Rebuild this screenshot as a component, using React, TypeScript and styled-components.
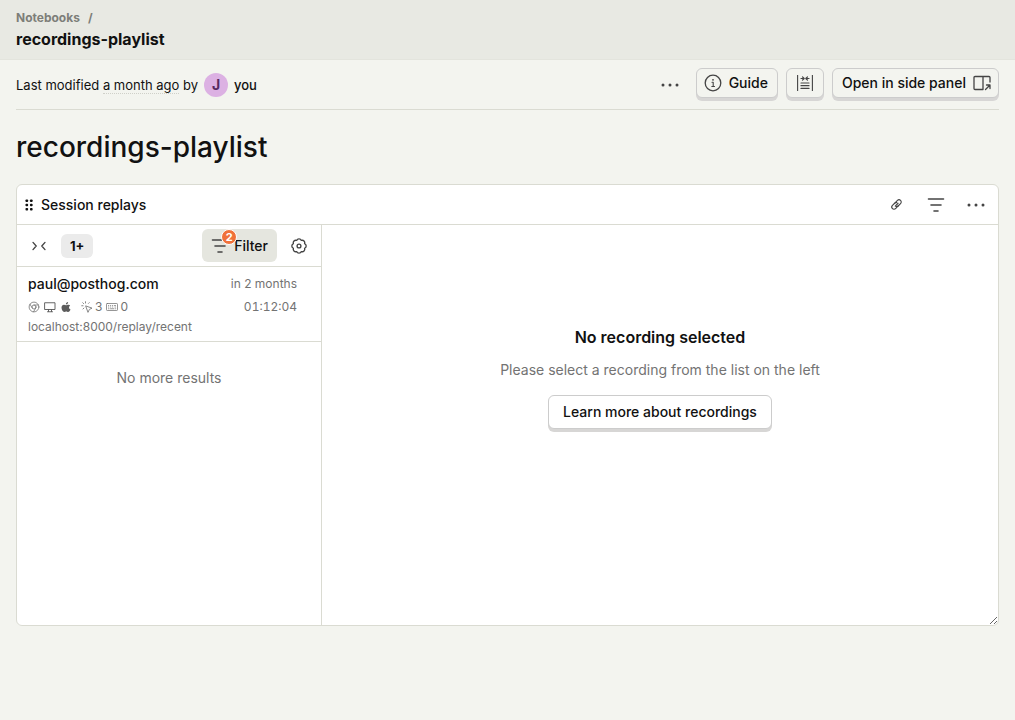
import React from "react";
import styled, { createGlobalStyle, css } from "styled-components";

const colors = {
  page: "#f3f4ef",
  header: "#e8e9e3",
  border: "#dadbd2",
  text: "#111111",
  muted: "#737373",
  icon: "#444444",
};

const GlobalStyle = createGlobalStyle`
  *, *::before, *::after { box-sizing: border-box; }
  body {
    margin: 0;
    background: ${colors.page};
    color: ${colors.text};
    font-family: Inter, "Liberation Sans", sans-serif;
    font-size: 14px;
    line-height: 20px;
  }
  h1, h2, h3, p, ul { margin: 0; padding: 0; }
  svg { display: block; flex: none; }
`;

const TopBar = styled.header`
  padding: 8px 16px;
  background: ${colors.header};
  border-bottom: 1px solid #e3e4dd;
`;

const Breadcrumbs = styled.nav`
  display: flex;
  gap: 8px;
  font-size: 12px;
  font-weight: 700;
  color: #7d7e79;
`;

const BreadcrumbLink = styled.a`
  color: inherit;
  text-decoration: none;
`;

const PageName = styled.h1`
  font-size: 16px;
  line-height: 23px;
  font-weight: 700;
`;

const Content = styled.main`
  padding: 0 16px;
`;

const MetaBar = styled.div`
  display: flex;
  align-items: center;
  justify-content: space-between;
  height: 50px;
  border-bottom: 1px solid ${colors.border};
`;

const Modified = styled.div`
  display: flex;
  align-items: center;
  gap: 6px;
  font-size: 13px;
  line-height: 18px;
`;

const RelativeTime = styled.time`
  border-bottom: 1px dotted #cfd0c9;
`;

const Avatar = styled.span`
  display: flex;
  align-items: center;
  justify-content: center;
  width: 24px;
  height: 24px;
  border-radius: 50%;
  background: #dcb1e3;
  color: #572a62;
  font-size: 14px;
  font-weight: 700;
`;

const UserName = styled.span`
  font-weight: 500;
`;

const Actions = styled.div`
  display: flex;
  align-items: center;
  gap: 8px;
`;

const buttonPadding = {
  none: "0 8px",
  start: "0 9px 0 6px",
  end: "0 6px 0 9px",
  large: "0 14px",
};

const RaisedButton = styled.button<{ $icon?: "start" | "end"; $large?: boolean; $surface?: string }>`
  display: inline-flex;
  align-items: center;
  justify-content: center;
  gap: 6px;
  height: ${(p) => (p.$large ? 34 : 30)}px;
  margin-bottom: 3px;
  padding: ${(p) => buttonPadding[p.$large ? "large" : p.$icon ?? "none"]};
  border: 1px solid #cccccc;
  border-radius: 6px;
  background: ${(p) => p.$surface ?? colors.page};
  box-shadow: 0 3px 0 #d7d6d5;
  color: ${colors.text};
  font: 500 14px/20px Inter, "Liberation Sans", sans-serif;
  white-space: nowrap;
  cursor: pointer;
`;

const FlatButton = styled.button<{ $active?: boolean; $small?: boolean }>`
  position: relative;
  display: inline-flex;
  align-items: center;
  justify-content: center;
  gap: 4px;
  height: 33px;
  min-width: ${(p) => (p.$small ? 28 : 36)}px;
  padding: 0;
  border: 0;
  border-radius: 6px;
  background: none;
  color: ${colors.text};
  font: 500 14px/20px Inter, "Liberation Sans", sans-serif;
  cursor: pointer;
  ${(p) =>
    p.$active &&
    css`
      padding: 0 9px 0 8px;
      background: #e5e6df;
    `}
`;

const NotebookTitle = styled.h2`
  padding: 18px 0;
  font-size: 28px;
  line-height: 38px;
  font-weight: 500;
`;

const Node = styled.section`
  display: flex;
  flex-direction: column;
  min-height: 442px;
  border: 1px solid ${colors.border};
  border-radius: 6px;
  background: #ffffff;
  overflow: hidden;
  resize: vertical;
`;

const NodeHeader = styled.header`
  display: flex;
  align-items: center;
  justify-content: space-between;
  height: 40px;
  padding: 0 4px 0 8px;
  border-bottom: 1px solid ${colors.border};
`;

const NodeTitle = styled.h3`
  display: flex;
  align-items: center;
  gap: 8px;
  font-size: 14px;
  font-weight: 500;
`;

const NodeActions = styled.div`
  display: flex;
  gap: 4px;
`;

const NodeBody = styled.div`
  display: flex;
  flex: 1;
`;

const Sidebar = styled.aside`
  flex: 0 0 305px;
  border-right: 1px solid ${colors.border};
`;

const SidebarBar = styled.div`
  display: flex;
  align-items: center;
  gap: 8px;
  height: 42px;
  padding: 0 8px;
  border-bottom: 1px solid ${colors.border};
`;

const CountTag = styled.span`
  margin-right: auto;
  padding: 2px 9px;
  border-radius: 6px;
  background: #ebebeb;
  font-size: 13px;
  line-height: 20px;
  font-weight: 700;
`;

const FilterCount = styled.span`
  position: absolute;
  top: 0;
  left: 19px;
  width: 16px;
  height: 16px;
  border: 1px solid #ffffff;
  border-radius: 50%;
  background: #f0713a;
  color: #ffffff;
  font-size: 11px;
  line-height: 14px;
  font-weight: 700;
  text-align: center;
`;

const RecordingList = styled.ul`
  list-style: none;
`;

const Recording = styled.li`
  padding: 4px 24px 4px 11px;
  border-bottom: 1px solid ${colors.border};
  color: ${colors.muted};
  font-size: 12px;
`;

const RecordingRow = styled.div<{ $lead?: boolean }>`
  display: flex;
  align-items: center;
  justify-content: space-between;
  height: ${(p) => (p.$lead ? 26 : 20)}px;
`;

const Person = styled.span`
  color: ${colors.text};
  font-size: 14px;
  font-weight: 500;
`;

const Duration = styled.span`
  font-variant-numeric: tabular-nums;
`;

const Properties = styled.div`
  display: flex;
  align-items: center;
  gap: 4px;
`;

const ActivityCount = styled.span`
  display: flex;
  align-items: center;
  gap: 2px;
`;

const Activity = styled.div`
  display: flex;
  gap: 4px;
  margin-left: 5px;
`;

const ListEnd = styled.p`
  padding: 26px 0;
  color: ${colors.muted};
  text-align: center;
`;

const EmptyState = styled.div`
  display: flex;
  flex: 1;
  flex-direction: column;
  align-items: center;
  padding: 100px 16px 16px;
  text-align: center;
`;

const EmptyTitle = styled.h3`
  font-size: 16px;
  line-height: 24px;
  font-weight: 600;
`;

const EmptyText = styled.p`
  padding: 11px 0 15px;
  color: ${colors.muted};
`;

type IconProps = { size?: number; children: React.ReactNode; box?: number; stroke?: number; color?: string };

const Icon = ({ size = 20, box = 24, stroke = 1.5, color = colors.icon, children }: IconProps) => (
  <svg
    width={size}
    height={size}
    viewBox={`0 0 ${box} ${box}`}
    fill="none"
    stroke={color}
    strokeWidth={stroke}
    strokeLinecap="round"
    strokeLinejoin="round"
    aria-hidden="true"
  >
    {children}
  </svg>
);

const EllipsisIcon = () => (
  <Icon box={20}>
    <g fill={colors.icon} stroke="none">
      <circle cx="3" cy="10" r="1.5" />
      <circle cx="10" cy="10" r="1.5" />
      <circle cx="17" cy="10" r="1.5" />
    </g>
  </Icon>
);

const FilterIcon = () => (
  <Icon box={20} stroke={1.6}>
    <path d="M2.500 4h15M5 10h10M8 16h4" />
  </Icon>
);

const InfoIcon = () => (
  <Icon box={20} stroke={1.3}>
    <circle cx="10" cy="10" r="7.800" />
    <path d="M9 9.200h1.200v4.300M8.800 13.500h2.700" strokeWidth="1.100" />
    <circle cx="10" cy="6.800" r=".9" fill={colors.icon} stroke="none" />
  </Icon>
);

const WidthIcon = () => (
  <Icon box={20} stroke={1.2}>
    <path d="M2.600 2v16M17.400 2v16" strokeLinecap="butt" strokeWidth="1.100" />
    <path d="M6 5.500h3M14 5.500h-3M7.500 3.800l1.700 1.700-1.700 1.700M12.500 3.800l-1.700 1.700 1.700 1.700M6 10h8M6 12.700h8M6 15.400h8" />
  </Icon>
);

const SidePanelIcon = () => (
  <Icon box={20} stroke={1.3}>
    <path d="M11 16.500H3A1 1 0 0 1 2 15.500V4.500A1 1 0 0 1 3 3.500H17A1 1 0 0 1 18 4.500V9M11 3.500V16.500M13.500 16.500L17.800 12.200M14.500 12H18V15.500" />
  </Icon>
);

const LinkIcon = () => (
  <Icon size={15}>
    <g strokeWidth="1.800">
      <path d="M10 14.500L14.500 10M9.300 9.800L13.500 5.500A3.500 3.500 0 0 1 18.500 10.500L15 14A3.500 3.500 0 0 1 11.500 15" />
      <path d="M14.700 14.200L10.500 18.500A3.500 3.500 0 0 1 5.500 13.500L9 10A3.500 3.500 0 0 1 12.500 9" />
    </g>
  </Icon>
);

const DragIcon = () => (
  <svg width="8" height="12" viewBox="0 0 8 12" fill="#111111" aria-hidden="true">
    {[0.5, 4.7, 8.9].map((y) => (
      <React.Fragment key={y}>
        <rect x="0.500" y={y} width="2.600" height="2.600" rx=".8" />
        <rect x="5" y={y} width="2.600" height="2.600" rx=".8" />
      </React.Fragment>
    ))}
  </svg>
);

const CollapseIcon = () => (
  <Icon box={20} size={16}>
    <path d="M2.500 5.500L6.500 10L2.500 14.500M17.500 5.500L13.500 10L17.500 14.500" strokeWidth="1.700" />
  </Icon>
);

const GearIcon = () => (
  <Icon stroke={1.6}>
    <path d="M18.700 14.800A3 3 0 0 1 14.800 18.700A3 3 0 0 1 9.200 18.700A3 3 0 0 1 5.300 14.800A3 3 0 0 1 5.300 9.200A3 3 0 0 1 9.200 5.300A3 3 0 0 1 14.800 5.300A3 3 0 0 1 18.700 9.200A3 3 0 0 1 18.700 14.800Z" />
    <circle cx="12" cy="12" r="2.300" />
  </Icon>
);

const ChromeIcon = () => (
  <Icon size={12} stroke={1.6} color={colors.muted}>
    <circle cx="12" cy="12" r="9.800" />
    <circle cx="12" cy="12" r="4" />
    <path d="M12 8h9M8.500 14L4 6.500M15.500 14L11 21.700" />
  </Icon>
);

const MonitorIcon = () => (
  <Icon size={12} stroke={1.8} color="#555555">
    <path d="M2 3.500H22V17H2ZM9 17.500V21M15 17.500V21M7 21.500H17" />
  </Icon>
);

const AppleIcon = () => (
  <Icon size={12}>
    <path
      fill="#5c5c5c"
      stroke="none"
      d="M16.200 2c.2 2.700-1.900 5-4.400 5-.3-2.500 2-4.800 4.400-5ZM20.300 8.900c-3.400 2.200-2.900 6.600.7 8.100-1.100 2.700-2.700 5-4.700 5-1.500 0-2.200-.9-3.900-.9s-2.500.9-3.900.9C5.600 22 3 16.900 3 13.200c0-3.600 2.300-5.700 4.900-5.700 1.700 0 3 1.100 4.100 1.100 1.200 0 2.700-1.200 4.800-1.200 1.500 0 2.700.6 3.500 1.500Z"
    />
  </Icon>
);

const ClickIcon = () => (
  <Icon size={12} stroke={1.7} color={colors.muted}>
    <path d="M10 10L22 14.300L16.800 16.800L14.300 22ZM9 1.500V4M3.500 3.500L5.300 5.300M1.500 9.500H4M4 16L5.800 14.200M15 4.800L16.500 3.300" />
  </Icon>
);

const KeyboardIcon = () => (
  <Icon size={12} stroke={1.5} color={colors.muted}>
    <rect x="1" y="5" width="22" height="14" rx="1.500" />
    <path d="M5 9H5.500M9 9H9.500M13 9H13.500M17 9H19M5 12H5.500M9 12H9.500M13 12H13.500M18 12H19M5 15.500H6M9 15.500H16M19 15.500H19.500" />
  </Icon>
);

export default function App() {
  return (
    <>
      <GlobalStyle />
      <TopBar>
        <Breadcrumbs aria-label="Breadcrumb">
          <BreadcrumbLink href="#notebooks">Notebooks</BreadcrumbLink>
          <span>/</span>
        </Breadcrumbs>
        <PageName>recordings-playlist</PageName>
      </TopBar>
      <Content>
        <MetaBar>
          <Modified>
            <span>
              Last modified <RelativeTime>a month ago</RelativeTime> by
            </span>
            <Avatar>J</Avatar>
            <UserName>you</UserName>
          </Modified>
          <Actions>
            <FlatButton aria-label="More options">
              <EllipsisIcon />
            </FlatButton>
            <RaisedButton $icon="start">
              <InfoIcon />
              Guide
            </RaisedButton>
            <RaisedButton aria-label="Content width">
              <WidthIcon />
            </RaisedButton>
            <RaisedButton $icon="end">
              Open in side panel
              <SidePanelIcon />
            </RaisedButton>
          </Actions>
        </MetaBar>
        <NotebookTitle>recordings-playlist</NotebookTitle>
        <Node>
          <NodeHeader>
            <NodeTitle>
              <DragIcon />
              Session replays
            </NodeTitle>
            <NodeActions>
              <FlatButton aria-label="Link">
                <LinkIcon />
              </FlatButton>
              <FlatButton aria-label="Filters">
                <FilterIcon />
              </FlatButton>
              <FlatButton aria-label="More">
                <EllipsisIcon />
              </FlatButton>
            </NodeActions>
          </NodeHeader>
          <NodeBody>
            <Sidebar>
              <SidebarBar>
                <FlatButton $small aria-label="Collapse list">
                  <CollapseIcon />
                </FlatButton>
                <CountTag>1+</CountTag>
                <FlatButton $active>
                  <FilterIcon />
                  Filter
                  <FilterCount>2</FilterCount>
                </FlatButton>
                <FlatButton $small aria-label="Settings">
                  <GearIcon />
                </FlatButton>
              </SidebarBar>
              <RecordingList>
                <Recording>
                  <RecordingRow $lead>
                    <Person>paul@posthog.com</Person>
                    <span>in 2 months</span>
                  </RecordingRow>
                  <RecordingRow>
                    <Properties>
                      <ChromeIcon />
                      <MonitorIcon />
                      <AppleIcon />
                      <Activity>
                        <ActivityCount>
                          <ClickIcon />3
                        </ActivityCount>
                        <ActivityCount>
                          <KeyboardIcon />0
                        </ActivityCount>
                      </Activity>
                    </Properties>
                    <Duration>01:12:04</Duration>
                  </RecordingRow>
                  <RecordingRow>localhost:8000/replay/recent</RecordingRow>
                </Recording>
              </RecordingList>
              <ListEnd>No more results</ListEnd>
            </Sidebar>
            <EmptyState>
              <EmptyTitle>No recording selected</EmptyTitle>
              <EmptyText>Please select a recording from the list on the left</EmptyText>
              <RaisedButton $large $surface="#ffffff">
                Learn more about recordings
              </RaisedButton>
            </EmptyState>
          </NodeBody>
        </Node>
      </Content>
    </>
  );
}
